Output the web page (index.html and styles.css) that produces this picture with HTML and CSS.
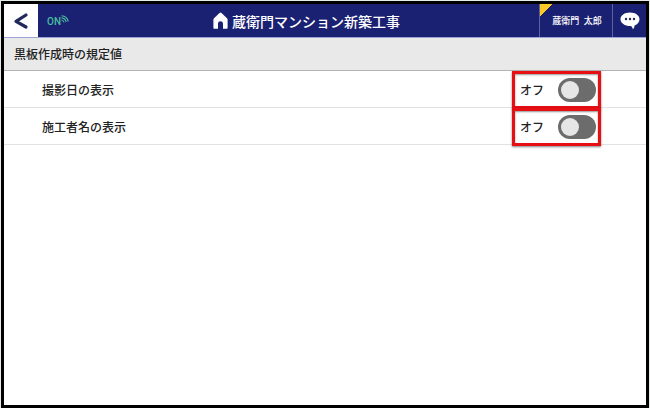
FILE: index.html
```html
<!DOCTYPE html>
<html lang="ja">
<head>
    <meta charset="UTF-8">
    <meta name="viewport" content="width=device-width, initial-scale=1.0">
    <title>黒板作成時の規定値</title>
    <link rel="stylesheet" href="styles.css">
</head>
<body>
    <div class="screen">
        <header class="header">
            <button class="back-btn" type="button" aria-label="戻る">
                <svg width="16" height="18" viewBox="0 0 16 18"><path d="M13 3L3 9.300l10 5.700" fill="none" stroke="#20285c" stroke-width="3.200" stroke-linecap="round" stroke-linejoin="round"/></svg>
            </button>
            <div class="status">
                <span>ON</span>
                <svg width="8" height="8" viewBox="0 0 8 8" fill="none" stroke="#49bd9f" stroke-width="1.100"><path d="M.5.700Q6 1 7.300 6.500M.5 2.900Q4.300 3.200 5.200 7M.5 5Q2.500 5.300 3 7.400"/></svg>
            </div>
            <h1 class="title">
                <svg width="15" height="17" viewBox="0 0 15 17"><path d="M7.500.4Q8 .4 8.500.9L14 6.200q.6.600.6 1.400V16q0 .7-.7.700H10V11.500q0-2.300-2.500-2.300T5 11.500V16.700H1.100q-.7 0-.7-.7V7.600Q.4 6.800 1 6.200L6.500.9Q7 .4 7.500.4z" fill="#fff"/></svg>
                <span>蔵衛門マンション新築工事</span>
            </h1>
            <button class="user-btn" type="button">蔵衛門&ensp;太郎</button>
            <button class="chat-btn" type="button" aria-label="メッセージ">
                <svg width="20" height="18" viewBox="0 0 20 18"><path d="M10 .5C15.500.500 19.500 3.300 19.500 7.300c0 2.900-2 5.100-5 6.100.1 1.500-.5 2.800-1.700 3.800-.2-1.500-1-2.700-2-3.100C5 14.300.5 11.300.5 7.300S4.500.500 10 .500z" fill="#fff"/><g fill="#20285c"><circle cx="6" cy="7" r="1.200"/><circle cx="10" cy="7" r="1.200"/><circle cx="14" cy="7" r="1.200"/></g></svg>
            </button>
        </header>

        <main>
            <h2 class="section-title">黒板作成時の規定値</h2>
            <div class="row">
                <span id="date-label">撮影日の表示</span>
                <label class="toggle">
                    オフ
                    <input class="switch" type="checkbox" role="switch" aria-labelledby="date-label">
                </label>
            </div>
            <div class="row">
                <span id="builder-label">施工者名の表示</span>
                <label class="toggle">
                    オフ
                    <input class="switch" type="checkbox" role="switch" aria-labelledby="builder-label">
                </label>
            </div>
        </main>
    </div>
</body>
</html>
```
FILE: styles.css
```css
* {
    box-sizing: border-box;
}
body {
    margin: 0;
    padding: 1px 1px 0;
    min-height: 100vh;
    display: flex;
    background-color: #e4ece8;
    font-family: "Noto Sans CJK JP", sans-serif;
    font-size: 12px;
    font-weight: 500;
    color: #222;
}
button {
    border: 0;
    padding: 0;
    font-family: inherit;
    cursor: pointer;
}
.screen {
    flex: 1;
    border: 3px solid #000;
    background-color: #fff;
}
.header {
    display: flex;
    height: 34px;
    background-color: #1b2172;
    border-bottom: 1px solid #9ba4d4;
    color: #fff;
}
.back-btn {
    display: flex;
    align-items: center;
    justify-content: center;
    width: 34px;
    background-color: #fff;
}
.status {
    display: flex;
    align-items: center;
    width: 36px;
    padding: 2px 0 0 9px;
    font-family: Roboto, sans-serif;
    font-size: 10px;
    color: #49bd9f;
}
.status svg {
    margin-bottom: 6px;
}
.title {
    flex: 1;
    display: flex;
    align-items: center;
    justify-content: center;
    gap: 4px;
    margin: 0;
    font-size: 14px;
    font-weight: 500;
    white-space: nowrap;
}
.user-btn {
    width: 73px;
    padding-left: 2px;
    border-left: 1px solid #5d639d;
    background: linear-gradient(135deg, #fbc926 9px, #1b2172 9px);
    color: #fff;
    font-size: 9px;
    font-weight: 500;
}
.chat-btn {
    display: flex;
    align-items: center;
    justify-content: center;
    width: 34px;
    border-left: 1px solid #5d639d;
    background-color: #1b2172;
}
.section-title {
    margin: 0;
    padding: 0 10px;
    height: 33px;
    line-height: 32px;
    background-color: #e9e9e9;
    border-bottom: 1px solid #b4b4b4;
    font-size: 12px;
    font-weight: 500;
}
.row {
    display: flex;
    align-items: center;
    justify-content: space-between;
    height: 37px;
    padding: 1px 45px 0 38px;
    border-bottom: 1px solid #e2e2e2;
}
.toggle {
    display: flex;
    align-items: center;
    justify-content: space-between;
    width: 89px;
    height: 38px;
    padding: 0 2px 0 5px;
    border: 3px solid #e60f14;
    box-shadow: 0 1px 2px rgba(0, 0, 0, 0.5), inset 0 1px 2px rgba(0, 0, 0, 0.4);
}
.switch {
    appearance: none;
    display: flex;
    align-items: center;
    width: 38px;
    height: 24px;
    margin: 0;
    padding: 0 3px;
    border-radius: 12px;
    background-color: #6c6c6c;
    cursor: pointer;
}
.switch::before {
    content: "";
    width: 18px;
    height: 18px;
    border-radius: 50%;
    background-color: #e6e6e6;
}
.switch:checked {
    justify-content: flex-end;
    background-color: #1b2172;
}
```
